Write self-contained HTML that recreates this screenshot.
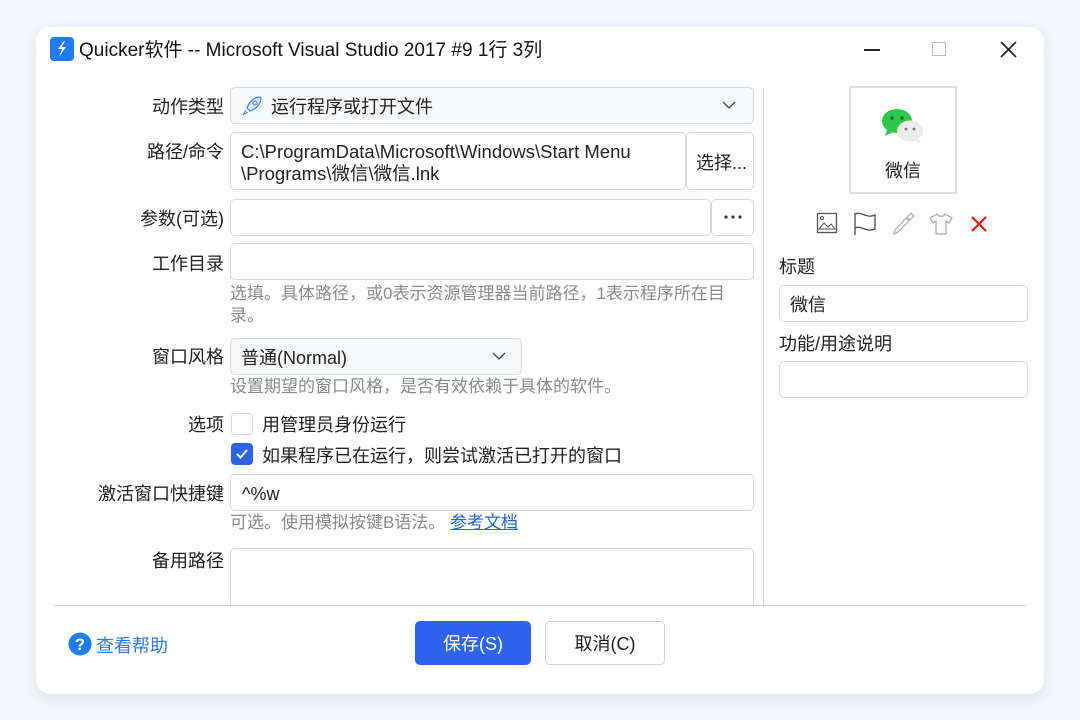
<!DOCTYPE html>
<html><head><meta charset="utf-8"><style>
*{box-sizing:border-box;margin:0;padding:0}
body{width:1080px;height:720px;background:#f2f5f9;font-family:"Liberation Sans","Noto Sans CJK SC",sans-serif;position:relative;overflow:hidden;color:#1a1a1a}
.win{position:absolute;left:36px;top:27px;width:1008px;height:667px;background:#fff;border-radius:14px;box-shadow:0 4px 14px rgba(0,0,0,.08)}
.a{position:absolute}
.lbl{position:absolute;font-size:18px;line-height:24px;text-align:right;width:190px;left:34px;color:#222;margin-top:2px}
.box{position:absolute;border:1px solid #d5d9e0;border-radius:5px;background:#fff}
.hint{position:absolute;font-size:17px;color:#8a8a8a;line-height:22px;margin-top:1px}
.t{font-size:18px;line-height:24px;color:#222;position:absolute;white-space:nowrap;margin-top:2px}
</style></head><body>
<div class="win"></div>
<!-- title -->
<svg class="a" style="left:50px;top:37px" width="24" height="24" viewBox="0 0 24 24"><rect width="24" height="24" rx="4" fill="#1e7cf5"/><path d="M14 4 L8 12 L12 12 L9 20 L16 10 L12 10 L15 4Z" fill="#fff"/></svg>
<div class="a" style="left:79px;top:39px;font-size:19px;line-height:24px;color:#111;white-space:nowrap">Quicker软件 -- Microsoft Visual Studio 2017 #9 1行 3列</div>
<div class="a" style="left:864px;top:49px;width:16px;height:1.5px;background:#222"></div>
<div class="a" style="left:932px;top:42px;width:14px;height:14px;border:1px solid #bbb"></div>
<svg class="a" style="left:1000px;top:41px" width="17" height="17"><path d="M1 1L16 16M16 1L1 16" stroke="#222" stroke-width="1.6"/></svg>

<!-- rows -->
<div class="lbl" style="top:93px">动作类型</div>
<div class="box" style="left:230px;top:87px;width:524px;height:37px;background:#f7f8fa"></div>
<svg class="a" style="left:240px;top:94px" width="24" height="24" viewBox="0 0 24 24"><path d="M20 3C14 3 9 8 7 14l3 3c6-2 11-7 11-13z" fill="#dbe8fb" stroke="#4a80d8" stroke-width="1.2"/><circle cx="15" cy="9" r="2" fill="none" stroke="#4a80d8"/><path d="M6 16l-3 5 5-3" fill="none" stroke="#4a80d8"/></svg>
<div class="t" style="left:271px;top:93px">运行程序或打开文件</div>
<svg class="a" style="left:722px;top:100px" width="14" height="10"><path d="M1 2l6 6 6-6" fill="none" stroke="#444" stroke-width="1.3"/></svg>

<div class="lbl" style="top:138px">路径/命令</div>
<div class="box" style="left:230px;top:132px;width:456px;height:58px"></div>
<div class="t" style="left:241px;top:139px;line-height:22px;font-size:18.5px">C:\ProgramData\Microsoft\Windows\Start Menu<br>\Programs\微信\微信.lnk</div>
<div class="box" style="left:686px;top:132px;width:68px;height:58px"></div>
<div class="t" style="left:696px;top:149px">选择...</div>

<div class="lbl" style="top:205px">参数(可选)</div>
<div class="box" style="left:230px;top:199px;width:481px;height:37px"></div>
<div class="box" style="left:711px;top:199px;width:43px;height:37px"></div>
<svg class="a" style="left:723px;top:214px" width="20" height="6"><circle cx="3" cy="3" r="1.6" fill="#333"/><circle cx="10" cy="3" r="1.6" fill="#333"/><circle cx="17" cy="3" r="1.6" fill="#333"/></svg>

<div class="lbl" style="top:250px">工作目录</div>
<div class="box" style="left:230px;top:243px;width:524px;height:37px"></div>
<div class="hint" style="left:230px;top:282px;width:524px">选填。具体路径，或0表示资源管理器当前路径，1表示程序所在目录。</div>

<div class="lbl" style="top:343px">窗口风格</div>
<div class="box" style="left:230px;top:338px;width:292px;height:37px;background:#f7f8fa"></div>
<div class="t" style="left:241px;top:344px">普通(Normal)</div>
<svg class="a" style="left:492px;top:351px" width="14" height="10"><path d="M1 2l6 6 6-6" fill="none" stroke="#444" stroke-width="1.3"/></svg>
<div class="hint" style="left:230px;top:375px">设置期望的窗口风格，是否有效依赖于具体的软件。</div>

<div class="lbl" style="top:411px">选项</div>
<div class="box" style="left:231px;top:413px;width:22px;height:22px;border-radius:4px"></div>
<div class="t" style="left:262px;top:411px">用管理员身份运行</div>
<div class="a" style="left:231px;top:443px;width:22px;height:22px;border-radius:4px;background:#2f62e6"></div>
<svg class="a" style="left:234px;top:446px" width="16" height="16"><path d="M3 8l3.5 3.5L13 4" fill="none" stroke="#fff" stroke-width="2"/></svg>
<div class="t" style="left:262px;top:442px">如果程序已在运行，则尝试激活已打开的窗口</div>

<div class="lbl" style="top:480px">激活窗口快捷键</div>
<div class="box" style="left:230px;top:474px;width:524px;height:37px"></div>
<div class="t" style="left:242px;top:480px">^%w</div>
<div class="hint" style="left:230px;top:511px">可选。使用模拟按键B语法。 <span style="color:#1a66d8;text-decoration:underline">参考文档</span></div>

<div class="lbl" style="top:547px">备用路径</div>
<div class="a" style="left:230px;top:548px;width:524px;height:58px;border:1px solid #d5d9e0;border-bottom:none;border-radius:5px 5px 0 0"></div>

<div class="a" style="left:763px;top:88px;width:1px;height:516px;background:#d0d4da"></div>
<div class="a" style="left:54px;top:605px;width:972px;height:1px;background:#c8ccd2"></div>

<!-- right -->
<div class="a" style="left:849px;top:86px;width:108px;height:108px;border:2px solid #e0e0e0"></div>
<svg class="a" style="left:880px;top:106px" width="46" height="40" viewBox="0 0 46 40"><ellipse cx="17" cy="15" rx="15" ry="12" fill="#2dc84d"/><path d="M7 24l-2 6 8-4z" fill="#2dc84d"/><ellipse cx="30" cy="25" rx="13" ry="10.5" fill="#ececec"/><path d="M38 32l3 5-8-3z" fill="#ececec"/><circle cx="12" cy="12" r="1.6" fill="#1a5a28"/><circle cx="22" cy="12" r="1.6" fill="#1a5a28"/><circle cx="26" cy="23" r="1.4" fill="#777"/><circle cx="34" cy="23" r="1.4" fill="#777"/></svg>
<div class="t" style="left:885px;top:157px">微信</div>
<svg class="a" style="left:816px;top:212px" width="22" height="22"><rect x="1.5" y="1.5" width="19" height="19" fill="none" stroke="#555" stroke-width="1.3"/><circle cx="6" cy="6" r="1.5" fill="none" stroke="#555"/><path d="M3 17l5-6 4 4 3-3 4 5z" fill="none" stroke="#555"/></svg>
<svg class="a" style="left:853px;top:211px" width="26" height="26"><path d="M2 2v22M2 3c7-3 11 5 20 1v14c-9 4-13-4-20-1" fill="none" stroke="#555" stroke-width="1.4"/></svg>
<svg class="a" style="left:891px;top:211px" width="24" height="26"><path d="M20 2l3 3-4 4-3-3zM15 7l3 3L7 21l-4 2 1-4z" fill="none" stroke="#aaa" stroke-width="1.2"/></svg>
<svg class="a" style="left:928px;top:212px" width="26" height="24"><path d="M9 2L2 6l3 5 3-2v13h10V9l3 2 3-5-7-4c-1 3-7 3-8 0z" fill="none" stroke="#aaa" stroke-width="1.2"/></svg>
<svg class="a" style="left:970px;top:215px" width="18" height="18"><path d="M2 2l14 14M16 2L2 16" stroke="#f01010" stroke-width="2.2"/></svg>

<div class="t" style="left:779px;top:253px">标题</div>
<div class="box" style="left:779px;top:285px;width:249px;height:37px"></div>
<div class="t" style="left:790px;top:291px">微信</div>
<div class="t" style="left:779px;top:330px">功能/用途说明</div>
<div class="box" style="left:779px;top:361px;width:249px;height:37px"></div>

<!-- footer -->
<svg class="a" style="left:68px;top:632px" width="24" height="24"><circle cx="12" cy="12" r="11.5" fill="#1d7ef0"/><text x="12" y="18" text-anchor="middle" font-size="17" font-weight="bold" fill="#fff" font-family="Liberation Sans">?</text></svg>
<div class="t" style="left:96px;top:632px;color:#2a7ae8">查看帮助</div>
<div class="a" style="left:415px;top:621px;width:116px;height:44px;border-radius:5px;background:#2f63ee;color:#fff;font-size:18px;text-align:center;line-height:46px">保存(S)</div>
<div class="a" style="left:545px;top:621px;width:120px;height:44px;border-radius:5px;border:1px solid #ccd2da;font-size:18px;text-align:center;line-height:44px">取消(C)</div>
</body></html>
